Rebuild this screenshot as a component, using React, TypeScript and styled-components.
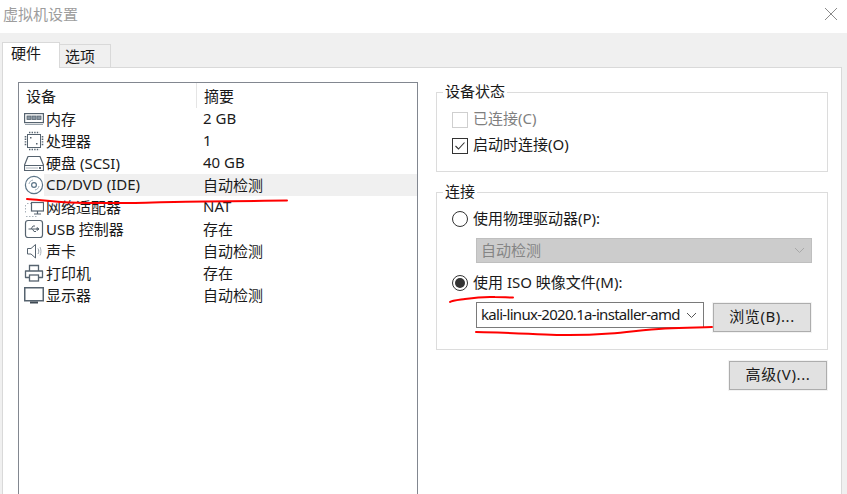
import React from "react";
import styled, { createGlobalStyle } from "styled-components";

const Global = createGlobalStyle`
  html, body { margin: 0; padding: 0; background: #fff; }
  body { font-family: "Noto Sans", "Noto Sans CJK SC", sans-serif; font-size: 15px; color: #1a1a1a; }
`;

const Window = styled.div`
  position: relative;
  width: 847px;
  height: 494px;
  overflow: hidden;
  display: flex;
  flex-direction: column;
  background: #fff;
`;

const TitleBar = styled.div`
  height: 33px;
  flex: none;
  display: flex;
  align-items: center;
  justify-content: space-between;
  padding: 0 9px 7px 3px;
  box-sizing: border-box;
  color: #9d9d9d;
  font-size: 15px;
`;

const CloseIcon = styled.svg`
  width: 14px;
  height: 14px;
  margin-top: 2px;
`;

const Body = styled.div`
  flex: 1;
  min-height: 0;
  overflow: hidden;
  background: #f0f0f0;
  padding: 9px 5px 0 2px;
  display: flex;
  flex-direction: column;
`;

const TabRow = styled.div`
  display: flex;
  align-items: flex-end;
  height: 25px;
  flex: none;
  position: relative;
  z-index: 1;
`;

const Tab = styled.div<{ $active?: boolean }>`
  box-sizing: border-box;
  border: 1px solid #d9d9d9;
  background: ${(p) => (p.$active ? "#fff" : "#f0f0f0")};
  width: ${(p) => (p.$active ? "58px" : "51px")};
  height: ${(p) => (p.$active ? "26px" : "23px")};
  line-height: ${(p) => (p.$active ? "20px" : "23px")};
  padding-left: ${(p) => (p.$active ? "8px" : "5px")};
  border-bottom: none;
  border-left: ${(p) => (p.$active ? "1px solid #d9d9d9" : "none")};
  margin-bottom: ${(p) => (p.$active ? "-1px" : "0")};
`;

const Panel = styled.div`
  flex: none;
  height: 520px;
  background: #fff;
  border: 1px solid #d9d9d9;
  display: flex;
  padding: 14px 0 0 15px;
`;

const List = styled.div`
  width: 398px;
  height: 500px;
  flex: none;
  border: 1px solid #828790;
  box-sizing: content-box;
`;

const ListHead = styled.div`
  display: flex;
  height: 25px;
  align-items: center;
`;

const HeadCell = styled.div<{ $first?: boolean }>`
  box-sizing: border-box;
  height: 100%;
  line-height: 26px;
  padding-left: 7px;
  width: ${(p) => (p.$first ? "178px" : "auto")};
  border-right: ${(p) => (p.$first ? "1px solid #e5e5e5" : "none")};
`;

const Row = styled.div`
  display: flex;
  height: 22px;
  align-items: center;
  padding-left: 5px;
`;

const RowIcon = styled.svg`
  width: 20px;
  height: 22px;
  flex: none;
`;

const RowName = styled.div<{ $selected?: boolean }>`
  flex: 1;
  display: flex;
  align-items: center;
  box-sizing: border-box;
  height: 22px;
  padding: 0 0 2px 2px;
  white-space: nowrap;
  background: ${(p) => (p.$selected ? "#f0f0f0" : "transparent")};
`;

const NameCell = styled.span`
  width: 157px;
  flex: none;
`;

const Side = styled.div`
  margin-left: 18px;
  width: 392px;
  flex: none;
  display: flex;
  flex-direction: column;
`;

const Group = styled.fieldset<{ $gap?: number; $bottom: number }>`
  margin: ${(p) => p.$gap ?? 0}px 0 0;
  padding: 0 0 ${(p) => p.$bottom}px 15px;
  min-width: 0;
  border: 1px solid #dcdcdc;
`;

const Legend = styled.legend`
  margin-left: -9px;
  padding: 0 2px 0 2px;
  line-height: 18px;
  height: 20px;
`;

const OptionRow = styled.div<{ $top?: number; $muted?: boolean }>`
  display: flex;
  align-items: center;
  gap: 5px;
  height: 26px;
  margin-top: ${(p) => p.$top ?? 0}px;
  color: ${(p) => (p.$muted ? "#7f7f7f" : "inherit")};
  white-space: nowrap;
`;

const Label = styled.span<{ $lift?: number }>`
  margin-bottom: ${(p) => p.$lift ?? 4}px;
`;

const CheckBox = styled.span<{ $muted?: boolean }>`
  width: 16px;
  height: 16px;
  box-sizing: border-box;
  border: 1px solid ${(p) => (p.$muted ? "#cfcfcf" : "#333")};
  display: inline-flex;
  align-items: center;
  justify-content: center;
  flex: none;
`;

const Radio = styled.span<{ $on?: boolean }>`
  width: 16px;
  height: 16px;
  box-sizing: border-box;
  border-radius: 50%;
  border: 1px solid #333;
  display: inline-flex;
  align-items: center;
  justify-content: center;
  flex: none;
  &::after {
    content: "";
    display: ${(p) => (p.$on ? "block" : "none")};
    width: 10px;
    height: 10px;
    border-radius: 50%;
    background: #333;
  }
`;

const Select = styled.div<{ $disabled?: boolean }>`
  box-sizing: border-box;
  height: ${(p) => (p.$disabled ? "25px" : "26px")};
  width: ${(p) => (p.$disabled ? "336px" : "228px")};
  margin-left: 24px;
  margin-top: ${(p) => (p.$disabled ? "6px" : "0")};
  padding: 0 6px 0 4px;
  border: 1px solid ${(p) => (p.$disabled ? "#bfbfbf" : "#7a7a7a")};
  background: ${(p) => (p.$disabled ? "#cccccc" : "#fff")};
  color: ${(p) => (p.$disabled ? "#858585" : "inherit")};
  display: flex;
  align-items: center;
  justify-content: space-between;
  flex: none;
`;

const SelectText = styled.span<{ $tight?: boolean }>`
  width: 199px;
  overflow: hidden;
  white-space: nowrap;
  margin-bottom: 3px;
  letter-spacing: ${(p) => (p.$tight ? "-0.7px" : "0")};
`;

const Chevron = styled.svg`
  width: 11px;
  height: 7px;
  flex: none;
`;

const FileRow = styled.div`
  display: flex;
  align-items: flex-start;
  gap: 9px;
  margin-top: 6px;
`;

const Button = styled.div`
  box-sizing: border-box;
  width: 98px;
  height: 29px;
  background: #e1e1e1;
  border: 1px solid #adadad;
  box-shadow: 0 0 0 1px #f3f3f3;
  display: flex;
  align-items: center;
  justify-content: center;
  flex: none;
  letter-spacing: 0.6px;
  padding-bottom: 4px;
`;

const BrowseButton = styled(Button)`
  margin-top: 1px;
`;

const AdvancedButton = styled(Button)`
  align-self: flex-end;
  margin: 11px 1px 0 0;
`;

const Ink = styled.svg`
  position: absolute;
  left: 0;
  top: 0;
  width: 847px;
  height: 494px;
  pointer-events: none;
`;

const G = "#56636f";

const devices: { name: string; value: string; icon: React.ReactNode; selected?: boolean }[] = [
  {
    name: "内存",
    value: "2 GB",
    icon: (
      <g fill="none" stroke={G}>
        <rect x="0.6" y="5.6" width="18.8" height="9" strokeWidth="1.2" />
        <rect x="3" y="8" width="4" height="3.5" fill="#8996a1" stroke="#56636f" strokeWidth="0.8" />
        <rect x="8" y="8" width="4" height="3.5" fill="#8996a1" stroke="#56636f" strokeWidth="0.8" />
        <rect x="13" y="8" width="4" height="3.5" fill="#8996a1" stroke="#56636f" strokeWidth="0.8" />
        <path d="M1 16.5H19" stroke="#9aa4ad" />
      </g>
    ),
  },
  {
    name: "处理器",
    value: "1",
    icon: (
      <g fill="none" stroke={G}>
        <rect x="3.5" y="4.5" width="13" height="13" />
        <path d="M5 2.5H15.5M5 19.5H15.5M1.5 6V16.5M18.5 6V16.5" strokeDasharray="1.4 1.2" strokeWidth="1.6" />
        <rect x="6" y="7" width="1.5" height="1.5" fill={G} stroke="none" />
        <rect x="12" y="13" width="1.5" height="1.5" fill={G} stroke="none" />
      </g>
    ),
  },
  {
    name: "硬盘 (SCSI)",
    value: "40 GB",
    icon: (
      <g fill="none" stroke={G}>
        <path d="M4 4.5H16L19.5 13V18.5H0.5V13Z" strokeLinejoin="round" strokeWidth="1.2" />
        <path d="M1 13.5H19" />
        <path d="M2 16H14" stroke="#a9b2ba" />
        <rect x="15" y="15" width="2" height="2" fill={G} stroke="none" />
      </g>
    ),
  },
  {
    name: "CD/DVD (IDE)",
    value: "自动检测",
    selected: true,
    icon: (
      <g fill="none" stroke="#5b7487">
        <circle cx="10" cy="11" r="8.6" strokeWidth="1.2" />
        <circle cx="10" cy="11" r="2.4" strokeWidth="1.2" />
        <path d="M5 10C5.3 8 6.8 6.4 9 6M15 12C14.7 14 13.2 15.6 11 16" stroke="#9aabb7" />
      </g>
    ),
  },
  {
    name: "网络适配器",
    value: "NAT",
    icon: (
      <g fill="none" stroke={G}>
        <path d="M1.5 9V17M3 7.5H7" stroke="#a9b2ba" strokeDasharray="1.5 1.5" />
        <path d="M2 20.5H13" stroke="#a9b2ba" strokeDasharray="1.5 1.5" />
        <rect x="7.5" y="6.5" width="12" height="8.5" fill="#fff" strokeWidth="1.2" />
        <path d="M13.5 15V17.5M10 18H17" strokeWidth="1.2" />
      </g>
    ),
  },
  {
    name: "USB 控制器",
    value: "存在",
    icon: (
      <g fill="none" stroke={G}>
        <rect x="1.5" y="2.5" width="17" height="17" rx="2.5" strokeWidth="1.2" />
        <path d="M4.5 11H15M15 11L13 9.6V12.4ZM7 11L9 8H11M8.5 11L10 13.5H12" />
      </g>
    ),
  },
  {
    name: "声卡",
    value: "自动检测",
    icon: (
      <g fill="none" stroke={G}>
        <path d="M3.5 8.5H7L11.5 4.5V18L7 14H3.5Z" strokeLinejoin="round" />
        <path d="M14 8.5C15 10.2 15 12.3 14 14" stroke="#8e99a3" />
        <path d="M16 7C17.3 9.4 17.3 13 16 15.5" stroke="#a9b2ba" />
      </g>
    ),
  },
  {
    name: "打印机",
    value: "存在",
    icon: (
      <g fill="none" stroke={G} strokeWidth="1.3">
        <path d="M5.5 9V3.5H14.5V9" />
        <path d="M5 15.5H1.5V9H18.5V15.5H15" strokeLinejoin="round" />
        <rect x="5.5" y="13" width="9" height="6" />
      </g>
    ),
  },
  {
    name: "显示器",
    value: "自动检测",
    icon: (
      <g fill="none" stroke={G}>
        <rect x="0.75" y="3.75" width="18.5" height="13" strokeWidth="1.5" />
        <path d="M6 18.5H14" stroke="#3f4a54" strokeWidth="2" />
      </g>
    ),
  },
];

const ChevronDown = ({ color }: { color: string }) => (
  <Chevron viewBox="0 0 11 7">
    <path d="M1 1L5.5 5.5L10 1" fill="none" stroke={color} />
  </Chevron>
);

export default function App() {
  return (
    <Window>
      <Global />
      <TitleBar>
        <span>虚拟机设置</span>
        <CloseIcon viewBox="0 0 14 14">
          <path d="M1 1L13 13M13 1L1 13" stroke="#8a8a8a" fill="none" />
        </CloseIcon>
      </TitleBar>
      <Body>
        <TabRow>
          <Tab $active>硬件</Tab>
          <Tab>选项</Tab>
        </TabRow>
        <Panel>
          <List>
            <ListHead>
              <HeadCell $first>设备</HeadCell>
              <HeadCell>摘要</HeadCell>
            </ListHead>
            {devices.map((d) => (
              <Row key={d.name}>
                <RowIcon viewBox="0 0 20 22">{d.icon}</RowIcon>
                <RowName $selected={d.selected}>
                  <NameCell>{d.name}</NameCell>
                  <span>{d.value}</span>
                </RowName>
              </Row>
            ))}
          </List>
          <Side>
            <Group $bottom={12}>
              <Legend>设备状态</Legend>
              <OptionRow $top={5} $muted>
                <CheckBox $muted />
                <Label $lift={6}>已连接(C)</Label>
              </OptionRow>
              <OptionRow>
                <CheckBox>
                  <svg width="12" height="12" viewBox="0 0 12 12">
                    <path d="M1.5 6L4.5 9L10.5 2.5" fill="none" stroke="#333" strokeWidth="1.1" />
                  </svg>
                </CheckBox>
                <Label $lift={6}>启动时连接(O)</Label>
              </OptionRow>
            </Group>
            <Group $gap={10} $bottom={17}>
              <Legend>连接</Legend>
              <OptionRow $top={4}>
                <Radio />
                <Label>使用物理驱动器(P):</Label>
              </OptionRow>
              <Select $disabled>
                <SelectText>自动检测</SelectText>
                <ChevronDown color="#a8a8a8" />
              </Select>
              <OptionRow $top={7}>
                <Radio $on />
                <Label>使用 ISO 映像文件(M):</Label>
              </OptionRow>
              <FileRow>
                <Select>
                  <SelectText $tight>kali-linux-2020.1a-installer-amd64.iso</SelectText>
                  <ChevronDown color="#555" />
                </Select>
                <BrowseButton>浏览(B)...</BrowseButton>
              </FileRow>
            </Group>
            <AdvancedButton>高级(V)...</AdvancedButton>
          </Side>
        </Panel>
      </Body>
      <Ink viewBox="0 0 847 494">
        <g fill="none" stroke="#f00" strokeWidth="2" strokeLinecap="round">
          <path d="M27 199C40 200 55 202 70 202.5C95 203.5 115 203 135 203C160 202.5 180 201.5 205 201.5C235 201 260 201 287 200.5" />
          <path d="M450 302C452 300.5 458 300 465 299C475 297.5 485 296.5 495 297C502 297 508 297.5 513 297.5" />
          <path d="M476 332C495 332.5 520 333 545 334.5C565 335.5 590 335 610 333.5C630 332 645 329.5 665 328.5C685 327.5 700 327.5 712 327" />
        </g>
      </Ink>
    </Window>
  );
}
